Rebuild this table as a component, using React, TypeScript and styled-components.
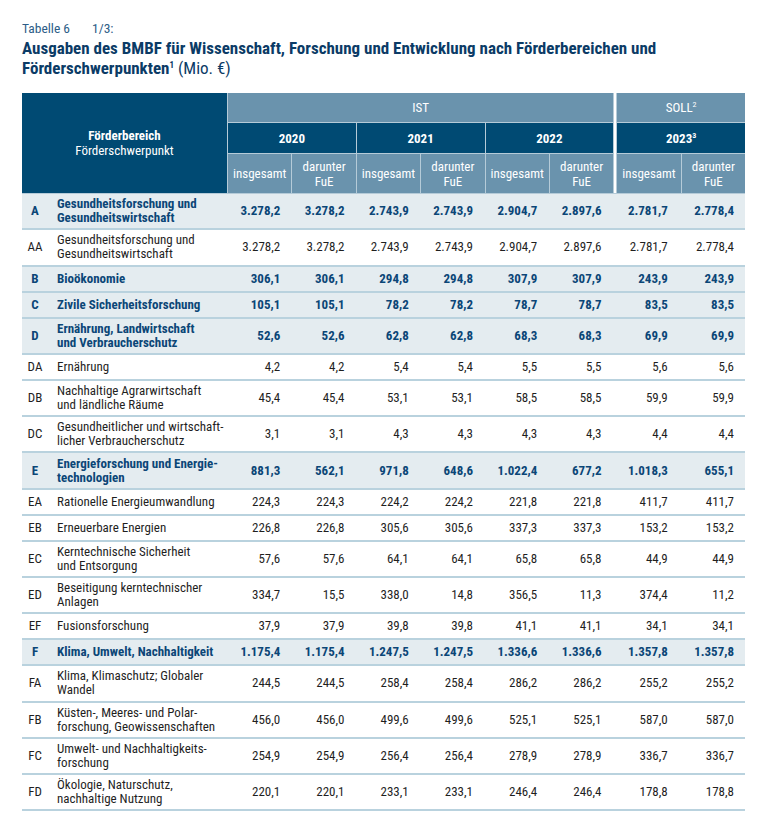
import React from "react";
import styled, { createGlobalStyle } from "styled-components";

const FONT = `"Liberation Sans Narrow", "Roboto Condensed", "Liberation Sans", sans-serif`;

const Global = createGlobalStyle`
  html, body { margin: 0; padding: 0; background: #ffffff; }
  body { font-family: ${FONT}; -webkit-font-smoothing: antialiased; }
`;

const Page = styled.div`
  width: 766px;
  padding: 20px 22px 0 22px;
  box-sizing: border-box;
  font-family: ${FONT};
`;

const Caption = styled.div`
  font-size: 13.5px;
  line-height: 16px;
  color: #2d5d87;
  display: flex;
  gap: 22px;
`;

const Heading = styled.h1`
  margin: 2px 0 0 0;
  font-size: 17px;
  line-height: 20px;
  font-weight: 700;
  color: #0b3b66;
  sup { font-size: 9px; line-height: 0; vertical-align: 6px; }
`;

const Light = styled.span`
  font-weight: 400;
`;

const Table = styled.div`
  margin-top: 15px;
  width: 723px;
`;

const Head = styled.div`
  display: grid;
  grid-template-columns: 205px repeat(6, 1fr) 2px repeat(2, 1fr);
  grid-template-rows: 29px 30px 39px;
  gap: 1px;
  background: #b5cbd8;
  padding-bottom: 1px;
`;

const HeadCell = styled.div<{ $col: number; $span?: number; $row: number; $rows?: number; $dark?: boolean; $bold?: boolean }>`
  grid-column: ${(p) => p.$col} / span ${(p) => p.$span ?? 1};
  grid-row: ${(p) => p.$row} / span ${(p) => p.$rows ?? 1};
  background: ${(p) => (p.$dark ? "#004a73" : "#6a93ad")};
  color: #ffffff;
  font-size: 13px;
  line-height: 15px;
  font-weight: ${(p) => (p.$bold ? 700 : 400)};
  display: flex;
  flex-direction: column;
  align-items: center;
  justify-content: center;
  text-align: center;
  sup { font-size: 8px; line-height: 0; vertical-align: 5px; }
`;

const HeadTitle = styled.span`
  font-weight: 700;
`;

const Divider = styled.div`
  grid-column: 8;
  grid-row: 1 / span 3;
  background: #ffffff;
`;

const Row = styled.div<{ $main?: boolean }>`
  display: grid;
  grid-template-columns: 26px 179px repeat(6, 64.25px) repeat(2, 66.25px);
  align-items: center;
  box-sizing: border-box;
  min-height: 26px;
  padding: 3.15px 0;
  border-bottom: 2px solid #b9d2de;
  background: ${(p) => (p.$main ? "#e4ecf0" : "#ffffff")};
  color: ${(p) => (p.$main ? "#0b4677" : "#1f1f1f")};
  font-weight: ${(p) => (p.$main ? 700 : 400)};
  font-size: 13px;
  line-height: 14px;
`;

const Code = styled.div`
  text-align: center;
`;

const Label = styled.div`
  padding-left: 9px;
`;

const Num = styled.div`
  text-align: right;
  padding-right: 11px;
`;

type R = { code: string; label: string[]; vals: string[]; main?: boolean };

const rows: R[] = [
  { code: "A", label: ["Gesundheitsforschung und", "Gesundheitswirtschaft"], vals: ["3.278,2", "3.278,2", "2.743,9", "2.743,9", "2.904,7", "2.897,6", "2.781,7", "2.778,4"], main: true },
  { code: "AA", label: ["Gesundheitsforschung und", "Gesundheitswirtschaft"], vals: ["3.278,2", "3.278,2", "2.743,9", "2.743,9", "2.904,7", "2.897,6", "2.781,7", "2.778,4"] },
  { code: "B", label: ["Bioökonomie"], vals: ["306,1", "306,1", "294,8", "294,8", "307,9", "307,9", "243,9", "243,9"], main: true },
  { code: "C", label: ["Zivile Sicherheitsforschung"], vals: ["105,1", "105,1", "78,2", "78,2", "78,7", "78,7", "83,5", "83,5"], main: true },
  { code: "D", label: ["Ernährung, Landwirtschaft", "und Verbraucherschutz"], vals: ["52,6", "52,6", "62,8", "62,8", "68,3", "68,3", "69,9", "69,9"], main: true },
  { code: "DA", label: ["Ernährung"], vals: ["4,2", "4,2", "5,4", "5,4", "5,5", "5,5", "5,6", "5,6"] },
  { code: "DB", label: ["Nachhaltige Agrarwirtschaft", "und ländliche Räume"], vals: ["45,4", "45,4", "53,1", "53,1", "58,5", "58,5", "59,9", "59,9"] },
  { code: "DC", label: ["Gesundheitlicher und wirtschaft-", "licher Verbraucherschutz"], vals: ["3,1", "3,1", "4,3", "4,3", "4,3", "4,3", "4,4", "4,4"] },
  { code: "E", label: ["Energieforschung und Energie-", "technologien"], vals: ["881,3", "562,1", "971,8", "648,6", "1.022,4", "677,2", "1.018,3", "655,1"], main: true },
  { code: "EA", label: ["Rationelle Energieumwandlung"], vals: ["224,3", "224,3", "224,2", "224,2", "221,8", "221,8", "411,7", "411,7"] },
  { code: "EB", label: ["Erneuerbare Energien"], vals: ["226,8", "226,8", "305,6", "305,6", "337,3", "337,3", "153,2", "153,2"] },
  { code: "EC", label: ["Kerntechnische Sicherheit", "und Entsorgung"], vals: ["57,6", "57,6", "64,1", "64,1", "65,8", "65,8", "44,9", "44,9"] },
  { code: "ED", label: ["Beseitigung kerntechnischer", "Anlagen"], vals: ["334,7", "15,5", "338,0", "14,8", "356,5", "11,3", "374,4", "11,2"] },
  { code: "EF", label: ["Fusionsforschung"], vals: ["37,9", "37,9", "39,8", "39,8", "41,1", "41,1", "34,1", "34,1"] },
  { code: "F", label: ["Klima, Umwelt, Nachhaltigkeit"], vals: ["1.175,4", "1.175,4", "1.247,5", "1.247,5", "1.336,6", "1.336,6", "1.357,8", "1.357,8"], main: true },
  { code: "FA", label: ["Klima, Klimaschutz; Globaler", "Wandel"], vals: ["244,5", "244,5", "258,4", "258,4", "286,2", "286,2", "255,2", "255,2"] },
  { code: "FB", label: ["Küsten-, Meeres- und Polar-", "forschung, Geowissenschaften"], vals: ["456,0", "456,0", "499,6", "499,6", "525,1", "525,1", "587,0", "587,0"] },
  { code: "FC", label: ["Umwelt- und Nachhaltigkeits-", "forschung"], vals: ["254,9", "254,9", "256,4", "256,4", "278,9", "278,9", "336,7", "336,7"] },
  { code: "FD", label: ["Ökologie, Naturschutz,", "nachhaltige Nutzung"], vals: ["220,1", "220,1", "233,1", "233,1", "246,4", "246,4", "178,8", "178,8"] },
];

const subCols = [2, 3, 4, 5, 6, 7, 9, 10];

export default function App() {
  return (
    <>
      <Global />
      <Page>
        <Caption>
          <span>Tabelle 6</span>
          <span>1/3:</span>
        </Caption>
        <Heading>
          Ausgaben des BMBF für Wissenschaft, Forschung und Entwicklung nach Förderbereichen und
          <br />
          Förderschwerpunkten<sup>1</sup> <Light>(Mio. €)</Light>
        </Heading>
        <Table>
          <Head>
            <HeadCell $col={1} $row={1} $rows={3} $dark>
              <HeadTitle>Förderbereich</HeadTitle>
              <span>Förderschwerpunkt</span>
            </HeadCell>
            <HeadCell $col={2} $span={6} $row={1}>IST</HeadCell>
            <Divider />
            <HeadCell $col={9} $span={2} $row={1}>
              <span>
                SOLL<sup>2</sup>
              </span>
            </HeadCell>
            <HeadCell $col={2} $span={2} $row={2} $dark $bold>2020</HeadCell>
            <HeadCell $col={4} $span={2} $row={2} $dark $bold>2021</HeadCell>
            <HeadCell $col={6} $span={2} $row={2} $dark $bold>2022</HeadCell>
            <HeadCell $col={9} $span={2} $row={2} $dark $bold>
              <span>
                2023<sup>3</sup>
              </span>
            </HeadCell>
            {subCols.map((c, i) => (
              <HeadCell key={c} $col={c} $row={3}>
                {i % 2 === 0 ? (
                  <span>insgesamt</span>
                ) : (
                  <>
                    <span>darunter</span>
                    <span>FuE</span>
                  </>
                )}
              </HeadCell>
            ))}
          </Head>
          {rows.map((r) => (
            <Row key={r.code} $main={r.main}>
              <Code>{r.code}</Code>
              <Label>
                {r.label.map((l, i) => (
                  <React.Fragment key={i}>
                    {i > 0 && <br />}
                    {l}
                  </React.Fragment>
                ))}
              </Label>
              {r.vals.map((v, i) => (
                <Num key={i}>{v}</Num>
              ))}
            </Row>
          ))}
        </Table>
      </Page>
    </>
  );
}
